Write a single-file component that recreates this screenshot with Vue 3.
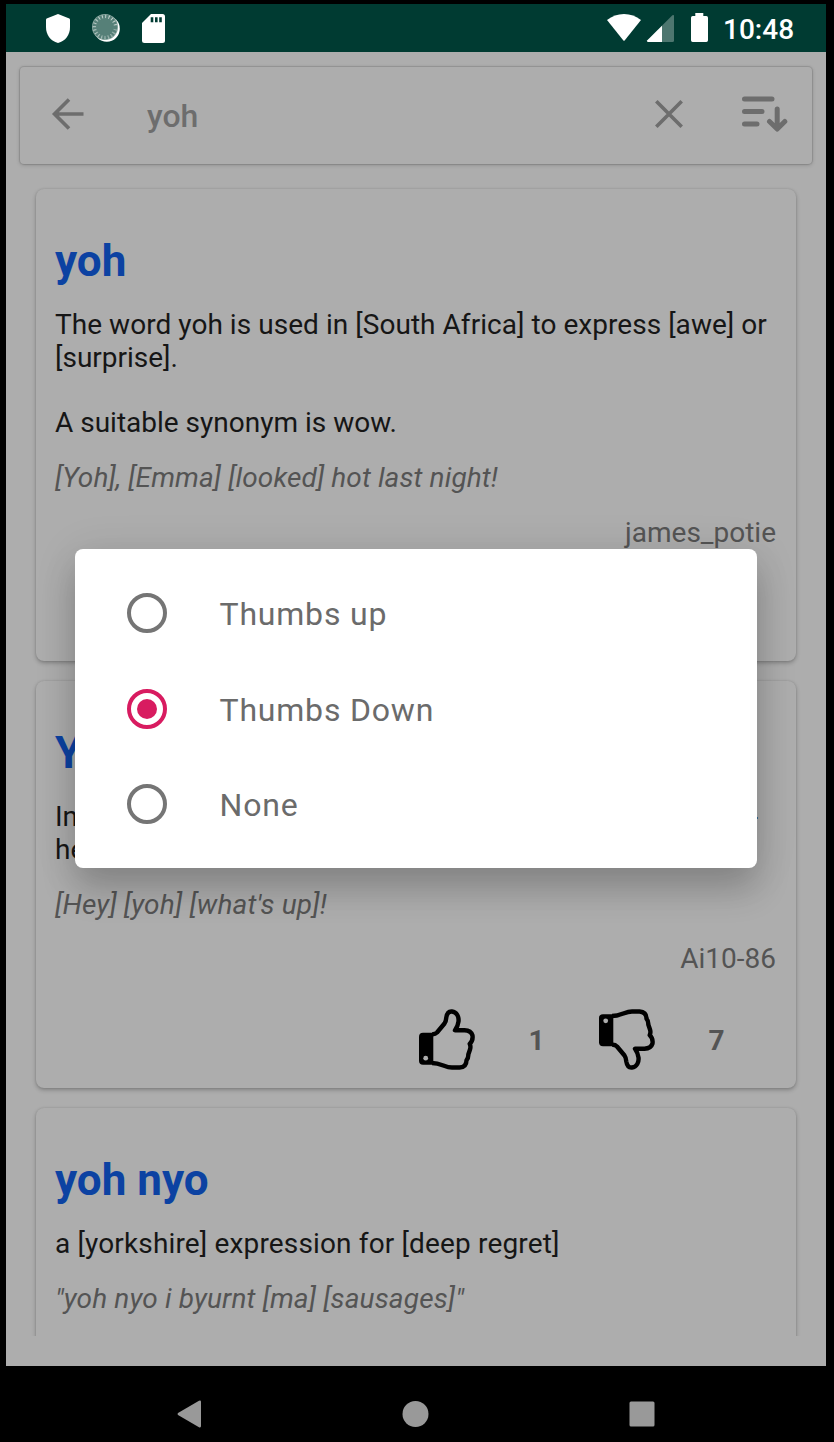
<script setup>
import { ref } from 'vue'

const options = ['Thumbs up', 'Thumbs Down', 'None']
const selected = ref('Thumbs Down')
</script>

<template>
  <div class="device">
    <div class="app">
      <header class="status">
        <svg class="shield" width="24" height="29" viewBox="0 0 24 29"><path d="M12 0 23.3 4.4Q24 4.8 24 6v7C24 21 19.500 27 12 29 4.500 27 0 21 0 13V6Q0 4.800.7 4.400Z" fill="#fff" /></svg>
        <svg class="sync" width="28" height="28" viewBox="0 0 28 28">
          <circle cx="14.800" cy="14.800" r="13" fill="#fff" />
          <circle cx="13" cy="13" r="13" fill="#8eaaa4" />
          <circle cx="13" cy="13" r="10" fill="none" stroke="#c3d1ce" stroke-width="4" stroke-dasharray="1 2.140" />
          <circle cx="13" cy="13" r="9" fill="#568078" />
          <circle cx="13" cy="13" r="10.300" fill="none" stroke="#568078" stroke-width="4" stroke-dasharray="2.100 1.200" />
        </svg>
        <svg class="sd" width="23" height="29" viewBox="0 0 23 29"><path d="M9 0H20.500Q23 0 23 2.500V26.500Q23 29 20.500 29H2.500Q0 29 0 26.500V9Z" fill="#fff" /><path d="M8.700 3.300h2.600v5H8.700zM13 3.300h2.600v5H13zM17.200 3.300h2.600v5h-2.600z" fill="#003b32" /></svg>
        <span class="grow"></span>
        <svg class="wifi" width="34" height="27" viewBox="0 0 34 27"><path d="M0 6Q7.500 0 17 0T34 6L17.600 26.500Q17 27.200 16.400 26.500Z" fill="#fff" /></svg>
        <svg class="signal" width="27" height="27" viewBox="0 0 27 27"><path d="M25.400.3Q27-.8 27 1v24.500q0 1.500-1.500 1.500H1Q-.5 27 .4 25.300Z" fill="#4d766f" /><path d="M15 10.700V27H1Q-.5 27 .4 25.300Z" fill="#fff" /></svg>
        <svg class="battery" width="17" height="29" viewBox="0 0 17 29"><path d="M4.300 0h8v3H15.300Q17 3 17 4.700V27.300Q17 29 15.300 29H1.700Q0 29 0 27.300V4.700Q0 3 1.700 3H4.300Z" fill="#fff" /></svg>
        <span class="time">10:48</span>
      </header>

      <div class="search">
        <svg class="back" width="32" height="32" viewBox="0 0 32 32"><path d="M31.500 16H3M17 1.500 2.500 16 17 30.500" /></svg>
        <span class="query">yoh</span>
        <svg class="clear" width="28" height="28" viewBox="0 0 28 28"><path d="M1.300 1.300 26.700 26.700M26.700 1.300 1.300 26.700" /></svg>
        <svg class="sort" width="46" height="36" viewBox="0 0 46 36"><path d="M2.500 3H30M2.500 15.500H20M2.500 28H15M35.200 13V32M27.500 25.500 35.200 33 42.800 25.500" /></svg>
      </div>

      <main class="list">
        <article class="card first">
          <h2>yoh</h2>
          <p class="body"><span class="lead">The word yoh is used in [South Africa] to express [awe] or</span> [surprise].<br><br>A suitable synonym is wow.</p>
          <p class="example">[Yoh], [Emma] [looked] hot last night!</p>
          <p class="author">james_potie</p>
        </article>

        <article class="card second">
          <h2>Y</h2>
          <p class="body"><span class="line"><span>In</span><span class="hyphen">-</span></span>he</p>
          <p class="example">[Hey] [yoh] [what's up]!</p>
          <p class="author">Ai10-86</p>
          <div class="votes">
            <svg class="thumb" width="60" height="63" viewBox="0 0 60 63">
              <path class="hand" d="M16 26.200Q19 26.500 21 24.500L28.500 15.500Q30 13.500 30.300 9.500C31 5 33 3.200 36 3.500 41 4 43 9 42.500 13.500Q42 18 39 22.300H48.500Q55 22.500 56.500 27.500C57 31 56.200 33.500 53.700 35.800Q55 38.500 54 41.500T52.300 46.500Q52.500 50 50.500 52.200C50.500 56.500 48 59.200 43.500 59.500H36C29 59.500 25 55 16 55" />
              <path d="M7 24.700H17.300V56.700H7Q3 56.700 3 53V28.700Q3 24.700 7 24.700Z" />
              <circle cx="9.700" cy="50.200" r="2.400" fill="#adadad" />
            </svg>
            <span class="count">1</span>
            <svg class="thumb down" width="60" height="63" viewBox="0 0 60 63">
              <path class="hand" d="M16 26.200Q19 26.500 21 24.500L28.500 15.500Q30 13.500 30.300 9.500C31 5 33 3.200 36 3.500 41 4 43 9 42.500 13.500Q42 18 39 22.300H48.500Q55 22.500 56.500 27.500C57 31 56.200 33.500 53.700 35.800Q55 38.500 54 41.500T52.300 46.500Q52.500 50 50.500 52.200C50.500 56.500 48 59.200 43.500 59.500H36C29 59.500 25 55 16 55" />
              <path d="M7 24.700H17.300V56.700H7Q3 56.700 3 53V28.700Q3 24.700 7 24.700Z" />
              <circle cx="9.700" cy="50.200" r="2.400" fill="#adadad" />
            </svg>
            <span class="count">7</span>
          </div>
        </article>

        <article class="card third">
          <h2>yoh nyo</h2>
          <p class="body">a [yorkshire] expression for [deep regret]</p>
          <p class="example">"yoh nyo i byurnt [ma] [sausages]"</p>
        </article>
      </main>
    </div>

    <nav class="nav">
      <svg width="24" height="28" viewBox="0 0 24 28"><path d="M22 .8Q24 0 24 2V26Q24 28 22 27.200L1 15Q0 14 1 13Z" /></svg>
      <svg width="26" height="26" viewBox="0 0 26 26"><circle cx="13.500" cy="13" r="13" /></svg>
      <svg width="26" height="26" viewBox="0 0 26 26"><rect x=".5" y=".5" width="25" height="25" rx="1.500" /></svg>
    </nav>

    <div class="dialog" role="dialog">
      <div v-for="o in options" :key="o" class="option" @click="selected = o">
        <span class="radio" :class="{ on: selected === o }"></span>
        <span class="label">{{ o }}</span>
      </div>
    </div>
  </div>
</template>

<style>
body { margin: 0; background: #000; }
</style>

<style scoped>
.device {
  position: relative;
  box-sizing: border-box;
  width: 834px;
  height: 1442px;
  padding: 4px 8px 0 6px;
  background: #000;
  overflow: hidden;
  font-family: Roboto, sans-serif;
}
svg { display: block; flex: none; overflow: visible; }
.app { height: 1362px; background: #adadad; overflow: hidden; }
.status {
  display: flex;
  height: 48px;
  background: #003b32;
  color: #fff;
  align-items: flex-start;
}
.status svg { margin-top: 9.5px; }
.status .shield { margin-left: 40px; }
.sync { margin-left: 22px; }
.sd { margin-left: 22px; }
.grow { flex: 1; }
.status .wifi { margin-top: 10px; }
.status .signal { margin: 11px 17px 0 6px; }
.status .battery { margin-top: 9px; }
.time {
  width: 103px;
  margin-left: 15px;
  font-size: 28px;
  font-weight: 500;
  line-height: 52px;
}
.search {
  display: flex;
  align-items: center;
  box-sizing: border-box;
  height: 97px;
  margin: 15px 14px 0;
  padding: 0 24.5px 0 31.500px;
  border-radius: 4px;
  background: #adadad;
  box-shadow: 0 0 1px 1px rgba(0, 0, 0, .12), 0 1px 4px rgba(0, 0, 0, .18);
}
.search path { fill: none; stroke: #6d6d6d; stroke-width: 3.6; }
.search .sort path { stroke-width: 5; stroke-linecap: round; stroke-linejoin: round; }
.search .back, .search .clear { margin-bottom: 3px; }
.search .sort { margin-bottom: 3.500px; }
.query {
  flex: 1;
  margin-left: 63.5px;
  font-size: 32px;
  font-weight: 500;
  color: #6d6d6d;
}
.clear { margin-right: 59px; }
.list {
  display: flex;
  flex-direction: column;
  gap: 20px;
  box-sizing: border-box;
  height: 1157px;
  margin-top: 15px;
  padding: 10px 30px 0;
  overflow: hidden;
}
.card {
  flex: none;
  box-sizing: border-box;
  padding: 46px 20px 0 19px;
  border-radius: 8px;
  background: #adadad;
  box-shadow: 0 0 2px rgba(0, 0, 0, .12), 0 2px 4px rgba(0, 0, 0, .26);
}
.first { height: 472px; }
.second { height: 407px; }
.third { height: 407px; }
h2, p { margin: 0; }
h2 { font-size: 44px; font-weight: 700; line-height: 52px; color: #0c42a2; }
p { font-size: 28px; line-height: 32.8px; margin-top: 22px; }
.body { margin-top: 22px; color: #161616; }
.lead { letter-spacing: .045px; }
.third .body { letter-spacing: .15px; }
.line { display: flex; justify-content: space-between; }
.hyphen { margin-right: 18px; }
.example { font-style: italic; color: #545454; letter-spacing: .11px; }
.second .example { letter-spacing: .19px; }
.third .example { letter-spacing: .14px; }
.author { text-align: right; color: #545454; }
.votes { display: flex; align-items: center; margin: 31.5px 0 0 361px; }
.thumb.down { transform: scaleY(-1); }
.thumb .hand { fill: none; stroke: #000; stroke-width: 4.4; stroke-linejoin: round; }
.count {
  width: 120px;
  padding-top: 2px;
  text-indent: 1px;
  text-align: center;
  font-size: 28px;
  font-weight: 700;
  color: #545454;
}
.nav {
  display: flex;
  align-items: center;
  height: 76px;
  padding: 10px 0 0 171px;
  gap: 201px;
  fill: #999;
}
.dialog {
  position: absolute;
  left: 75px;
  top: 549px;
  width: 682px;
  height: 319px;
  box-sizing: border-box;
  padding: 16px 52px;
  border-radius: 8px;
  background: #fff;
  box-shadow: 0 22px 34px rgba(0, 0, 0, .19), 0 4px 44px rgba(0, 0, 0, .1);
}
.option {
  display: flex;
  align-items: center;
  height: 95.7px;
  gap: 52.5px;
  font-size: 32px;
  letter-spacing: .8px;
  color: #6b6b6b;
}
.label { padding-top: 2px; }
.radio {
  display: flex;
  box-sizing: border-box;
  width: 40px;
  height: 40px;
  border: 4px solid #757575;
  border-radius: 50%;
}
.radio.on { border-color: #d81b60; }
.radio.on::after {
  content: "";
  width: 20px;
  height: 20px;
  margin: auto;
  border-radius: 50%;
  background: #d81b60;
}
</style>
